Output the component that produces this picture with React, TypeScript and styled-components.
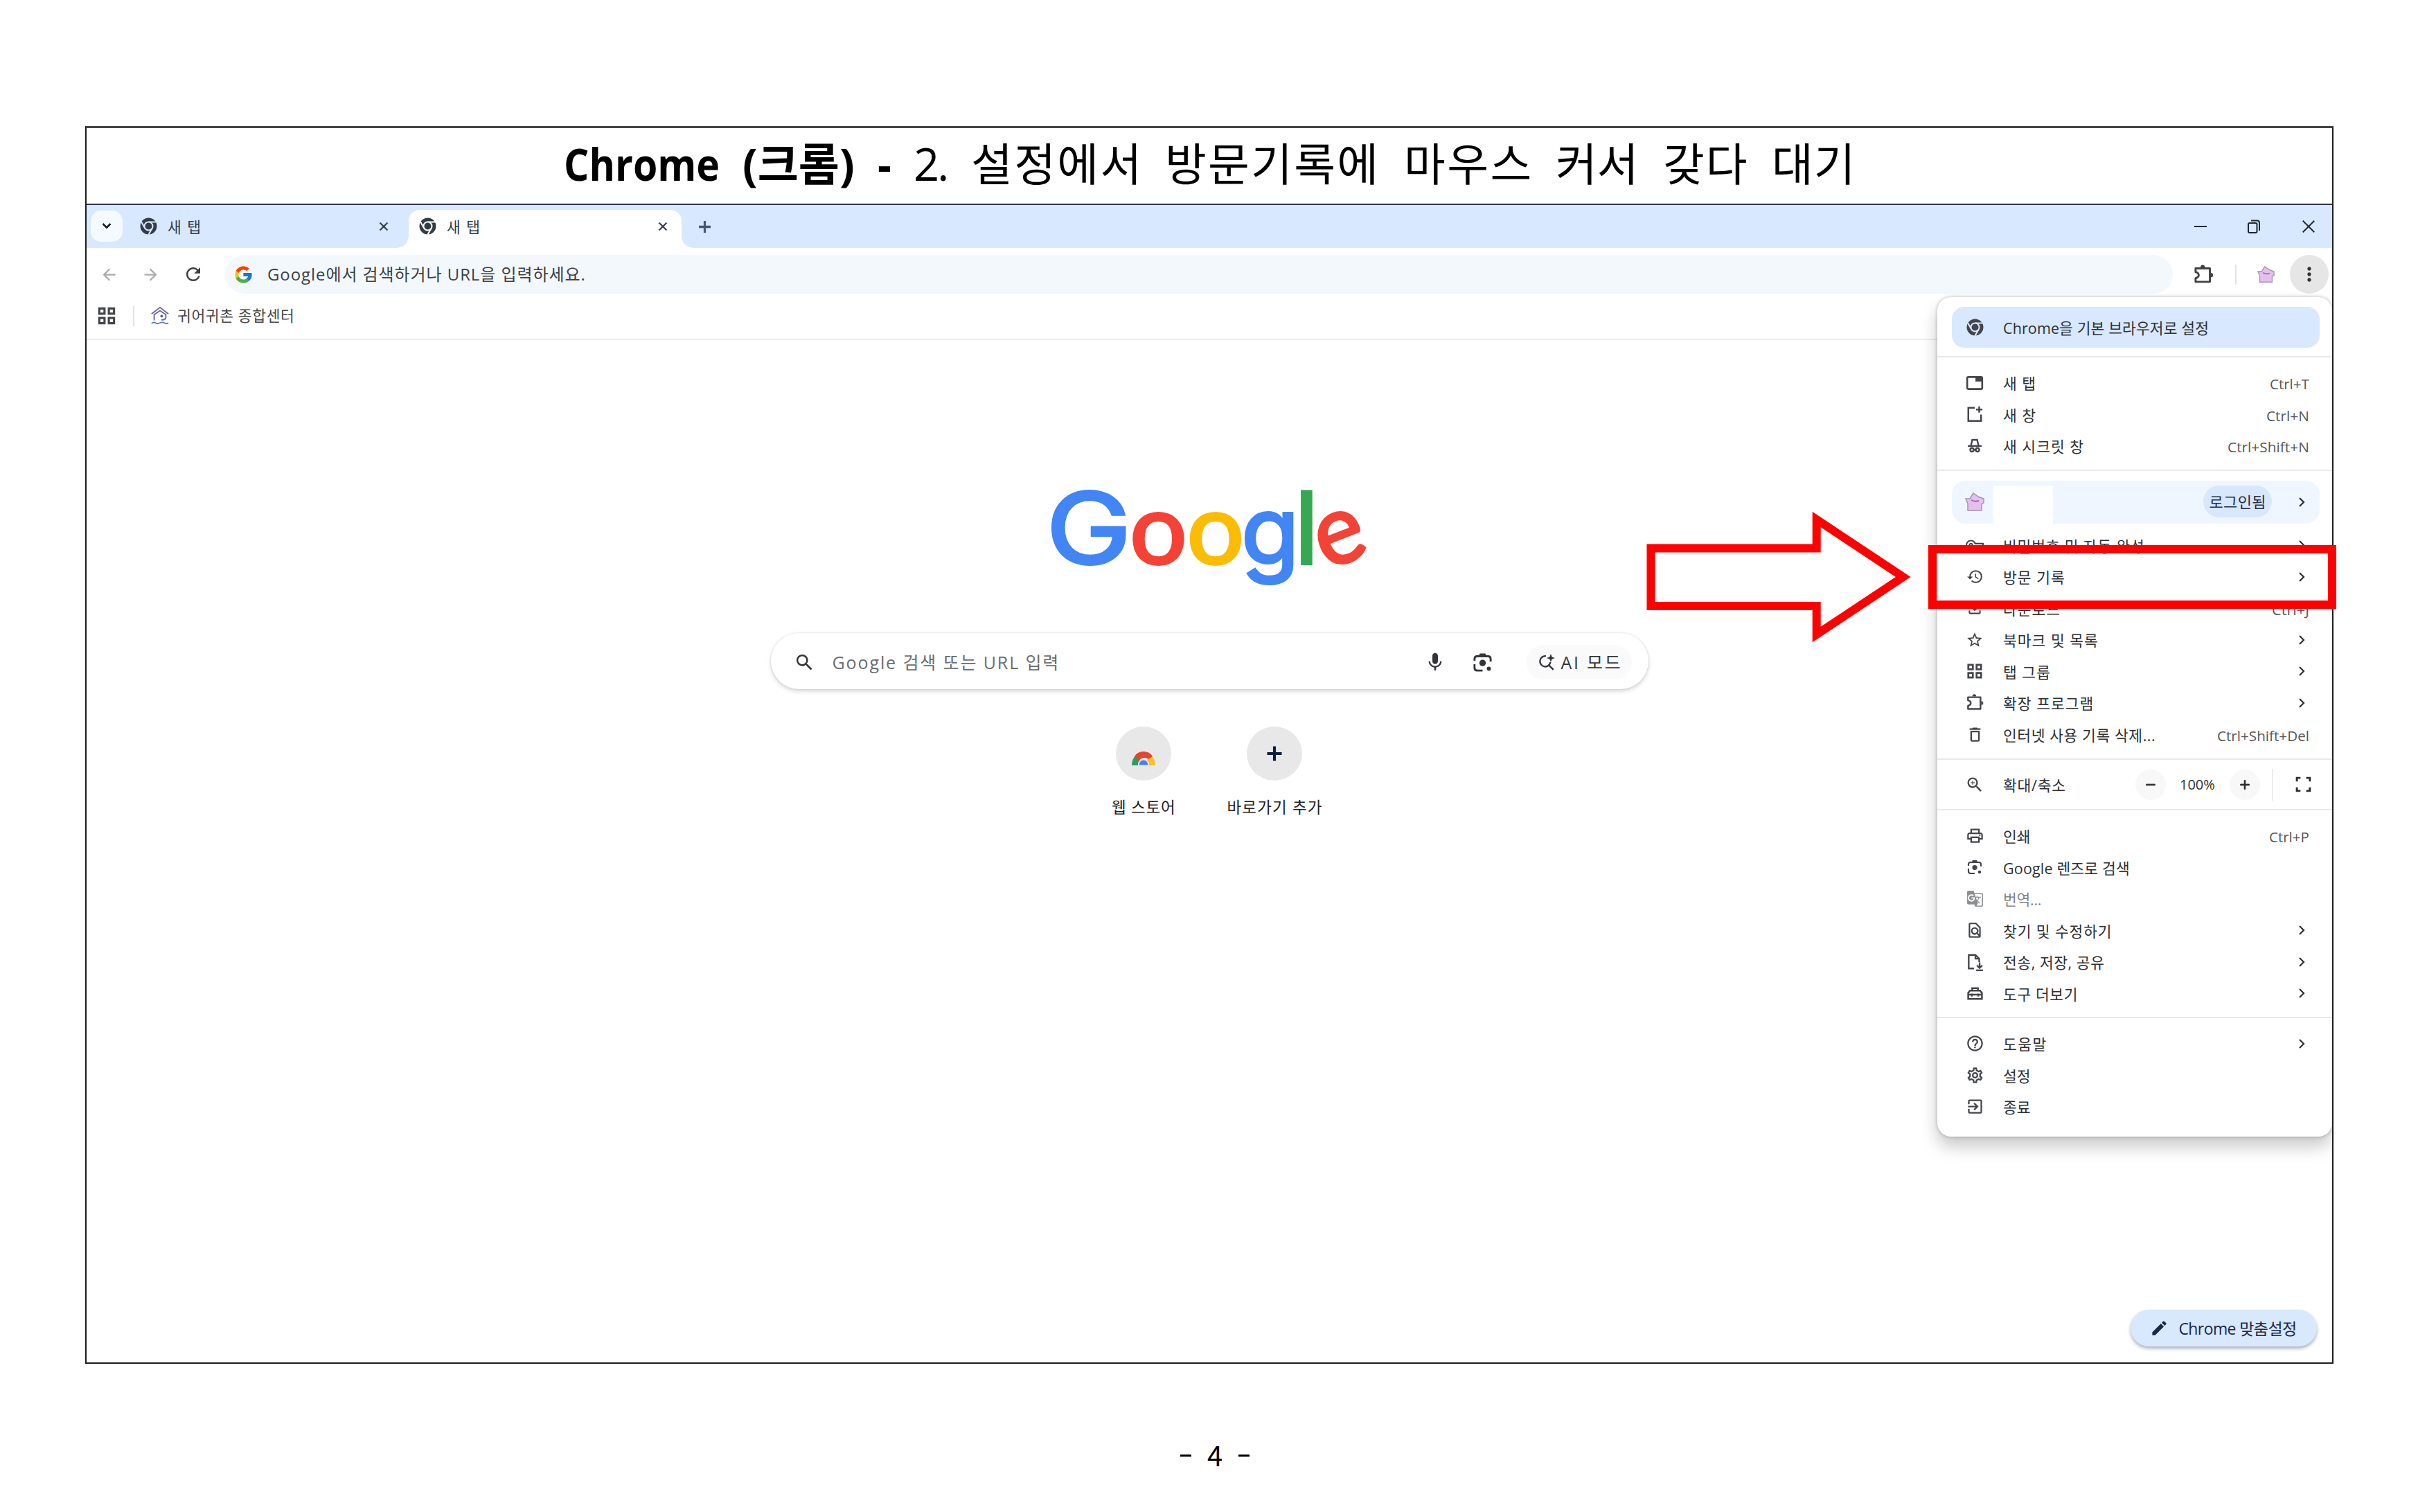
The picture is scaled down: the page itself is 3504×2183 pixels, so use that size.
import React from 'react';
import styled, { createGlobalStyle } from 'styled-components';
import {
  MdAdd,
  MdArrowBack,
  MdArrowForward,
  MdClose,
  MdEdit,
  MdExitToApp,
  MdGTranslate,
  MdHelpOutline,
  MdHistory,
  MdKeyboardArrowDown,
  MdMic,
  MdMoreVert,
  MdOutlineDelete,
  MdOutlineFileDownload,
  MdOutlineFindInPage,
  MdOutlinePrint,
  MdOutlineSettings,
  MdOutlineVpnKey,
  MdRefresh,
  MdRemove,
  MdSearch,
  MdStarBorder,
  MdZoomIn,
} from 'react-icons/md';
import { FcGoogle } from 'react-icons/fc';

const GlobalStyle = createGlobalStyle`
  * {
    box-sizing: border-box;
  }
  body {
    margin: 0;
    background: #ffffff;
    font-family: 'Open Sans', 'Noto Sans CJK KR', sans-serif;
    color: #2d2f33;
  }
  svg {
    display: block;
    flex: none;
  }
`;

/* ---------- text ---------- */

const TextSlot = styled.span<{ $width: number }>`
  display: inline-block;
  flex: none;
  width: ${(p) => p.$width}px;
  white-space: nowrap;
`;
const TextRun = styled.span`
  display: inline-block;
  transform-origin: 0 50%;
`;

interface FitProps {
  text: string;
  width: number;
  squeeze?: boolean;
}

// Fits a label to a fixed width, by its letter spacing or (squeeze) by narrowing the glyphs
function Fit({ text, width, squeeze }: FitProps) {
  const ref = React.useRef<HTMLSpanElement>(null);
  const [natural, setNatural] = React.useState<number>(width);

  React.useLayoutEffect(() => {
    if (!ref.current) return;
    ref.current.style.letterSpacing = '0px';
    const measured = ref.current.offsetWidth;
    ref.current.style.letterSpacing = squeeze ? '0px' : `${(width - measured) / Math.max(1, text.length - 1)}px`;
    setNatural(measured);
  }, [text, width, squeeze]);

  const fitted = squeeze
    ? { transform: `scaleX(${width / natural})` }
    : { letterSpacing: `${(width - natural) / Math.max(1, text.length - 1)}px` };

  return (
    <TextSlot $width={width}>
      <TextRun ref={ref} style={fitted}>
        {text}
      </TextRun>
    </TextSlot>
  );
}

/* ---------- icons ---------- */

interface IconProps {
  size?: number;
  back?: string;
}

const Heavy = styled.span`
  path:not([fill='none']) {
    stroke: currentColor;
    stroke-width: 0.9px;
  }
`;

const Stroke = ({ size = 26, width = 2, children }: { size?: number; width?: number; children: React.ReactNode }) => (
  <svg width={size} height={size} viewBox="0 0 24 24" fill="none" stroke="currentColor" strokeWidth={width}>
    {children}
  </svg>
);

const ChromeIcon = ({ size = 25, back = '#d8e8fe' }: IconProps) => (
  <svg width={size} height={size} viewBox="0 0 24 24">
    <circle cx="12" cy="12" r="11.5" fill="currentColor" />
    <g stroke={back} strokeWidth="2">
      <path d="M12 6.2H22.5M7 14.9L1.8 5.8M17 14.9L11.8 24" />
      <circle cx="12" cy="12" r="5.8" fill="currentColor" />
    </g>
  </svg>
);

const PuzzleIcon = ({ size = 26 }: IconProps) => (
  <svg width={size} height={size} viewBox="0 0 24 24" fill="none" stroke="currentColor" strokeWidth="2.2">
    <path d="M3 5H19V20H3V16Q6.500 15 6.500 12.500Q6.500 10 3 9Z" strokeLinejoin="round" />
    <path d="M8.500 4A2.500 2.800 0 0 1 13.500 4ZM20 10A2.500 2.500 0 0 1 20 15Z" fill="currentColor" stroke="none" />
  </svg>
);

const GridIcon = ({ size = 26 }: IconProps) => (
  <Stroke size={size} width={2.5}>
    <path d="M3.500 3.500H9.500V9.500H3.500ZM14.500 3.500H20.500V9.500H14.500ZM3.500 14.500H9.500V20.500H3.500ZM14.500 14.500H20.500V20.500H14.500Z" />
  </Stroke>
);

const NewTabIcon = () => (
  <Stroke width={2.4}>
    <rect x="2" y="4" width="20" height="16" rx="1.500" />
    <path d="M13 4H22V10H13Z" fill="currentColor" stroke="none" />
  </Stroke>
);

const NewWindowIcon = () => (
  <Stroke width={2.3}>
    <path d="M12 3.500H3.500V21H20.500V12.500M18 1.500V10M13.800 5.800H22.200" />
  </Stroke>
);

const IncognitoIcon = () => (
  <Stroke size={24} width={2.4}>
    <path d="M2 12H22M6.500 11.500L8.500 3H15.500L17.500 11.500M10.500 17.500H13.500" />
    <circle cx="8" cy="17.500" r="2.500" />
    <circle cx="16" cy="17.500" r="2.500" />
  </Stroke>
);

const LensIcon = ({ size = 26 }: IconProps) => (
  <Stroke size={size} width={2.2}>
    <path d="M3 10V8Q3 5 6 5H18Q21 5 21 8V11M3 14V18Q3 21 6 21H12" />
    <path d="M7.500 5L9 2H15L16.500 5Z" fill="currentColor" stroke="none" />
    <circle cx="12" cy="12.500" r="3.600" fill="currentColor" stroke="none" />
    <circle cx="19" cy="19" r="2.300" fill="currentColor" stroke="none" />
  </Stroke>
);

const SendIcon = () => (
  <Stroke width={2.2}>
    <path d="M11 20.500H4V2.500H13L18 7.500V12M13 2.500V7.500H18" />
    <path d="M18.500 12.500V20M15 16.500L18.500 20L22 16.500M14 23H23" />
  </Stroke>
);

const ToolboxIcon = () => (
  <Stroke size={25} width={2.4}>
    <path d="M2.500 19.500V11L5 8H19L21.500 11V19.500ZM8 8V4.500H16V8M2.500 13.500H21.500M7.500 12V16M16.500 12V16" />
  </Stroke>
);

const FullscreenIcon = () => (
  <Stroke size={25} width={2.8}>
    <path d="M3 8V3H8M16 3H21V8M21 16V21H16M8 21H3V16" />
  </Stroke>
);

const AiIcon = () => (
  <Stroke size={26} width={2.2}>
    <path d="M11 4A7 7 0 1 0 17 12M14.500 15.500L21 22" />
    <path d="M17.500 1L19 5L23 6.500L19 8L17.500 12L16 8L12 6.500L16 5Z" fill="currentColor" stroke="none" />
  </Stroke>
);

const CenterIcon = () => (
  <svg width="28" height="28" viewBox="0 0 30 30" fill="none" stroke="#6a62a8" strokeWidth="2">
    <path d="M2 12L15 2L28 12" />
    <path d="M6 22V13L15 7L24 13V18Q23 22 17 21" />
    <circle cx="17.500" cy="15.500" r="2" fill="#4060a8" stroke="none" />
    <path d="M2 27Q5 24 8 26T15 26T22 26T28 26" stroke="#5a7fb0" />
  </svg>
);

const AvatarIcon = ({ size = 28 }: IconProps) => (
  <svg width={size} height={size} viewBox="0 0 28 28">
    <path d="M1 9L7 9L12 1L19 6L27 9V15L24 17V26H4V16Z" fill="#e5bfee" stroke="#a893ae" strokeWidth="1.500" />
    <path d="M9 11Q14 14 20 12" fill="none" stroke="#a56bb5" strokeWidth="2" />
  </svg>
);

const RainbowIcon = () => (
  <svg width="34" height="21" viewBox="0 0 34 21">
    <path d="M0 21A17 20 0 0 1 6 6L12 13A8 9 0 0 0 9 21Z" fill="#2f9e58" />
    <path d="M34 21A17 20 0 0 0 28 6L22 13A8 9 0 0 1 25 21Z" fill="#fbc02d" />
    <path d="M4 8A15 14 0 0 1 30 8L24 12Q17 7 10 14Z" fill="#e2462f" />
    <path d="M10 21A7 8 0 0 1 24 21Z" fill="#4a80e8" stroke="#e8e8e8" strokeWidth="1" />
  </svg>
);

const RestoreIcon = () => (
  <svg width="20" height="22" viewBox="0 0 20 22" fill="none" stroke="currentColor" strokeWidth="2">
    <rect x="2" y="6" width="12.500" height="14" rx="2" />
    <path d="M6 2.500H15Q18 2.500 18 6V17" />
  </svg>
);

const ChevronIcon = () => (
  <svg width="22" height="22" viewBox="0 0 22 22" fill="none" stroke="currentColor" strokeWidth="2.200">
    <path d="M8 5L14 11L8 17" />
  </svg>
);

/* ---------- document page ---------- */

const Page = styled.main`
  position: relative;
  width: 3504px;
  height: 2183px;
  padding: 182px 0 0 123px;
  overflow: hidden;
  background: #ffffff;
`;
const Frame = styled.section`
  display: flex;
  flex-direction: column;
  width: 3246px;
  height: 1787px;
  border: 2px solid #1c1c1c;
  border-top: 3px solid #444444;
`;
const Heading = styled.h1`
  display: flex;
  align-items: center;
  height: 111px;
  margin: 0;
  padding: 0 0 7px 689px;
  border-bottom: 2px solid #2c3440;
  font-size: 65px;
  font-weight: 400;
  line-height: 102px;
  color: #000000;
`;
const Word = styled.span<{ $gap: number; $bold?: boolean }>`
  margin-right: ${(p) => p.$gap}px;
  font-weight: ${(p) => (p.$bold ? 700 : 400)};
`;
const PageNumber = styled.footer`
  display: flex;
  justify-content: center;
  gap: 23px;
  width: 104px;
  margin: 103px 0 0 1579px;
  font-family: 'Noto Sans CJK KR', sans-serif;
  font-size: 40px;
  line-height: 56px;
  color: #000000;
`;
const Dash = styled.span`
  width: 16px;
  height: 3px;
  margin-top: 28px;
  background: #000000;
`;

/* ---------- browser ---------- */

const Browser = styled.div`
  position: relative;
  display: flex;
  flex-direction: column;
  flex: 1;
  overflow: hidden;
`;
const TabStrip = styled.div`
  display: flex;
  align-items: center;
  height: 62px;
  padding: 0 23px 0 6px;
  background: #d8e8fe;
  color: #333b47;
`;
const TabSearch = styled.button`
  display: flex;
  align-items: center;
  justify-content: center;
  width: 46px;
  height: 45px;
  margin-top: -2px;
  padding: 0;
  border: 0;
  border-radius: 15px;
  background: #f4faff;
  color: #1f2022;
`;
const Tab = styled.div<{ $active?: boolean }>`
  position: relative;
  align-self: flex-end;
  display: flex;
  align-items: center;
  width: ${(p) => (p.$active ? 394 : 413)}px;
  height: 55px;
  padding: ${(p) => (p.$active ? '0 17px 8px 15px' : '0 26px 8px 25px')};
  border-radius: 16px 16px 0 0;
  background: ${(p) => (p.$active ? '#ffffff' : 'transparent')};
  font-size: 21.5px;
  line-height: 30px;

  &::before,
  &::after {
    content: '';
    position: absolute;
    bottom: 0;
    width: 16px;
    height: 16px;
    display: ${(p) => (p.$active ? 'block' : 'none')};
  }
  &::before {
    left: -16px;
    background: radial-gradient(circle at 0 0, transparent 15px, #ffffff 16px);
  }
  &::after {
    right: -16px;
    background: radial-gradient(circle at 100% 0, transparent 15px, #ffffff 16px);
  }
`;
const TabTitle = styled.span`
  flex: 1;
  margin: 2px 0 0 15px;
`;
const NewTabButton = styled.span`
  margin-left: 20px;
  color: #45566e;
`;
const WindowButtons = styled.div`
  display: flex;
  align-items: center;
  gap: 58px;
  margin-left: auto;
  color: #1c2430;
`;
const MinimizeBar = styled.span`
  width: 18px;
  height: 2px;
  background: #1c2430;
`;

const Toolbar = styled.div`
  display: flex;
  align-items: center;
  height: 76px;
  padding: 0 5px 0 19px;
  color: #3e4043;
`;
const NavButton = styled.span<{ $off?: boolean; $gap: number }>`
  margin-right: ${(p) => p.$gap}px;
  color: ${(p) => (p.$off ? '#a9abae' : '#3c3e41')};
`;
const Omnibox = styled.div`
  display: flex;
  align-items: center;
  width: 2812px;
  height: 56px;
  padding-left: 12px;
  border-radius: 28px;
  background: #f3f8fd;
  font-size: 24px;
  line-height: 34px;
`;
const OmniboxText = styled.span`
  margin-left: 20px;
`;
const ToolbarEnd = styled.div`
  display: flex;
  align-items: center;
  margin-left: auto;
`;
const ToolbarRule = styled.span<{ $gap: number }>`
  width: 2px;
  height: 29px;
  margin: 0 ${(p) => p.$gap}px;
  background: #dfe3e8;
`;
const MenuButton = styled.button`
  display: flex;
  align-items: center;
  justify-content: center;
  width: 56px;
  height: 56px;
  margin-left: 22px;
  padding: 0;
  border: 0;
  border-radius: 50%;
  background: #e6e6e7;
  color: #303134;
`;
const Bookmarks = styled.div`
  display: flex;
  align-items: center;
  height: 55px;
  padding: 0 0 11px 14px;
  margin-bottom: 2px;
  box-shadow: 0 1px 0 1px #ebebeb;
  color: #44464a;
  font-size: 21.5px;
  line-height: 30px;
`;
const BookmarkLabel = styled.span`
  margin-left: 11px;
`;

/* ---------- new tab page ---------- */

const Content = styled.div`
  display: flex;
  flex-direction: column;
  align-items: center;
  padding-top: 184px;
`;
const Logo = styled.div`
  display: flex;
  align-items: baseline;
  width: 456px;
  height: 170px;
  margin-right: 5px;
  font-family: Lato, sans-serif;
  font-size: 141px;
  line-height: 170px;
`;
const LogoLetter = styled.span<{ $width: number; $color: string; $stretch?: number; $turn?: number; $size?: number }>`
  display: flex;
  flex: none;
  justify-content: center;
  width: ${(p) => p.$width}px;
  color: ${(p) => p.$color};
  font-family: ${(p) => (p.$size ? 'Inter' : 'Lato')}, sans-serif;
  font-size: ${(p) => p.$size || 141}px;
  -webkit-text-stroke: 4px ${(p) => p.$color};
  transform: scaleX(${(p) => p.$stretch || 1}) rotate(${(p) => p.$turn || 0}deg);
`;
const SearchBox = styled.div`
  display: flex;
  align-items: center;
  width: 1267px;
  height: 81px;
  margin-top: 69px;
  padding: 3px 24px 0 33px;
  border-radius: 41px;
  box-shadow: 0 3px 6px rgba(0, 0, 0, 0.16), 0 0 3px rgba(0, 0, 0, 0.12);
  color: #333538;
  font-size: 25px;
  line-height: 36px;
`;
const SearchHint = styled.span`
  flex: 1;
  margin-left: 25px;
  color: #6b6d70;
`;
const AiMode = styled.span`
  display: flex;
  align-items: center;
  gap: 8px;
  height: 50px;
  margin-left: 48px;
  padding: 0 16px;
  border-radius: 25px;
  background: #fafafb;
`;
const LensSlot = styled.span`
  margin-left: 37px;
`;
const Shortcuts = styled.div`
  display: flex;
  gap: 40px;
  margin: 54px 1px 0 0;
`;
const Shortcut = styled.div`
  display: flex;
  flex-direction: column;
  align-items: center;
  width: 149px;
  font-size: 22.5px;
  line-height: 32px;
  color: #1f2022;
`;
const ShortcutDisc = styled.span`
  display: flex;
  align-items: center;
  justify-content: center;
  width: 80px;
  height: 78px;
  margin-bottom: 23px;
  border-radius: 50%;
  background: #e8e8e8;
  color: #0c1f42;
`;
const RainbowSlot = styled.span`
  margin-top: 12px;
`;
const Customize = styled.button`
  position: absolute;
  right: 22px;
  bottom: 23px;
  display: flex;
  align-items: center;
  gap: 14px;
  width: 269px;
  height: 53px;
  padding: 0 0 0 28px;
  border: 0;
  border-radius: 27px;
  background: #d8e8fd;
  box-shadow: 0 3px 5px rgba(40, 60, 90, 0.4);
  color: #1c2746;
  font-family: inherit;
  font-size: 23px;
  line-height: 32px;
`;

/* ---------- menu ---------- */

const Menu = styled.nav`
  position: absolute;
  top: 133px;
  right: 0;
  width: 570px;
  height: 1212px;
  padding-top: 14px;
  border-radius: 20px;
  background: #ffffff;
  box-shadow: 0 14px 24px rgba(0, 0, 0, 0.22), 0 0 5px rgba(0, 0, 0, 0.25);
  font-size: 21.5px;
  line-height: 30px;
`;
const MenuPill = styled.div<{ $profile?: boolean }>`
  display: flex;
  align-items: center;
  height: ${(p) => (p.$profile ? 62 : 59)}px;
  margin: 0 18px ${(p) => (p.$profile ? 9 : 12)}px 21px;
  padding: 0 15px 0 13px;
  border-radius: ${(p) => (p.$profile ? 20 : 18)}px;
  background: ${(p) => (p.$profile ? '#eff6ff' : '#d8e8fe')};
`;
const MenuGroup = styled.div<{ $top: number; $bottom: number }>`
  padding: ${(p) => p.$top}px 0 ${(p) => p.$bottom}px;
  border-top: 2px solid #e8e8ea;
`;
const MenuRow = styled.div<{ $muted?: boolean }>`
  display: flex;
  align-items: center;
  height: 45.5px;
  padding: 0 33px 0 34px;
  opacity: ${(p) => (p.$muted ? 0.6 : 1)};
`;
const MenuIcon = styled.span`
  display: flex;
  align-items: center;
  justify-content: center;
  flex: none;
  width: 40px;
  margin-right: 21px;
  color: #434549;
`;
const MenuLabel = styled.span`
  flex: 1;
  margin-top: 3px;
`;
const MenuHint = styled.span`
  margin-top: 3px;
  color: #55575a;
  font-size: 20.5px;
`;
const ProfileName = styled.span`
  width: 86px;
  height: 55px;
  margin: 7px auto 0 -14px;
  background: #ffffff;
`;
const SignedIn = styled.span`
  display: flex;
  align-items: center;
  justify-content: center;
  width: 99px;
  height: 46px;
  margin: -2px 32px 0 0;
  border-radius: 23px;
  background: #d8e7fb;
  color: #1d2f4c;
  font-size: 22px;
`;
const ZoomRow = styled.div`
  display: flex;
  align-items: center;
  height: 73px;
  padding: 0 29px 0 34px;
  border-top: 2px solid #e8e8ea;
`;
const ZoomButton = styled.span`
  display: flex;
  align-items: center;
  justify-content: center;
  width: 44px;
  height: 44px;
  border-radius: 50%;
  background: #f8f8f9;
`;
const ZoomValue = styled.span`
  margin: 0 21px 0 20px;
  font-size: 20px;
`;
const ZoomRule = styled.span`
  width: 2px;
  height: 46px;
  margin: 0 31px 0 17px;
  background: #ececee;
`;

/* ---------- annotations ---------- */

const HighlightBox = styled.div`
  position: absolute;
  left: 2784px;
  top: 787px;
  width: 589px;
  height: 92px;
  border: 12px solid #ff0000;
`;
const PointerArrow = styled.svg`
  position: absolute;
  left: 2370px;
  top: 730px;
`;

interface TitleWord {
  text: string;
  width: number;
  gap: number;
  bold?: boolean;
}

const titleWords: TitleWord[] = [
  { text: 'Chrome', width: 225, gap: 33, bold: true },
  { text: '(크롬)', width: 162, gap: 33, bold: true },
  { text: '-', width: 20, gap: 32, bold: true },
  { text: '2.', width: 51, gap: 32 },
  { text: '설정에서', width: 246, gap: 34 },
  { text: '방문기록에', width: 308, gap: 37 },
  { text: '마우스', width: 184, gap: 35 },
  { text: '커서', width: 120, gap: 35 },
  { text: '갖다', width: 122, gap: 35 },
  { text: '대기', width: 121, gap: 0 },
];

interface MenuEntry {
  icon: React.ReactNode;
  label: string;
  width: number;
  hint?: string;
  hintWidth?: number;
  submenu?: boolean;
  muted?: boolean;
}

const tabEntries: MenuEntry[] = [
  { icon: <NewTabIcon />, label: '새 탭', width: 47, hint: 'Ctrl+T', hintWidth: 57 },
  { icon: <NewWindowIcon />, label: '새 창', width: 47, hint: 'Ctrl+N', hintWidth: 62 },
  { icon: <IncognitoIcon />, label: '새 시크릿 창', width: 116, hint: 'Ctrl+Shift+N', hintWidth: 118 },
];
const dataEntries: MenuEntry[] = [
  { icon: <MdOutlineVpnKey size={26} />, label: '비밀번호 및 자동 완성', width: 204, submenu: true },
  { icon: <MdHistory size={25} />, label: '방문 기록', width: 89, submenu: true },
  { icon: <MdOutlineFileDownload size={26} />, label: '다운로드', width: 82, hint: 'Ctrl+J', hintWidth: 54 },
  { icon: <MdStarBorder size={26} />, label: '북마크 및 목록', width: 137, submenu: true },
  { icon: <GridIcon />, label: '탭 그룹', width: 68, submenu: true },
  { icon: <PuzzleIcon size={27} />, label: '확장 프로그램', width: 130, submenu: true },
  { icon: <MdOutlineDelete size={27} />, label: '인터넷 사용 기록 삭제...', width: 220, hint: 'Ctrl+Shift+Del', hintWidth: 133 },
];
const pageEntries: MenuEntry[] = [
  { icon: <MdOutlinePrint size={27} />, label: '인쇄', width: 40, hint: 'Ctrl+P', hintWidth: 58 },
  { icon: <LensIcon size={24} />, label: 'Google 렌즈로 검색', width: 183 },
  { icon: <MdGTranslate size={25} />, label: '번역...', width: 56, muted: true },
  { icon: <MdOutlineFindInPage size={26} />, label: '찾기 및 수정하기', width: 157, submenu: true },
  { icon: <SendIcon />, label: '전송, 저장, 공유', width: 146, submenu: true },
  { icon: <ToolboxIcon />, label: '도구 더보기', width: 108, submenu: true },
];
const appEntries: MenuEntry[] = [
  { icon: <MdHelpOutline size={27} />, label: '도움말', width: 62, submenu: true },
  { icon: <MdOutlineSettings size={27} />, label: '설정', width: 40 },
  { icon: <MdExitToApp size={27} />, label: '종료', width: 40 },
];

const renderEntry = (entry: MenuEntry) => (
  <MenuRow key={entry.label} $muted={entry.muted}>
    <MenuIcon>{entry.icon}</MenuIcon>
    <MenuLabel>
      <Fit text={entry.label} width={entry.width} />
    </MenuLabel>
    {entry.hint && (
      <MenuHint>
        <Fit text={entry.hint} width={entry.hintWidth || 60} squeeze />
      </MenuHint>
    )}
    {entry.submenu && <ChevronIcon />}
  </MenuRow>
);

function ChromeMenu() {
  return (
    <Menu>
      <MenuPill>
        <MenuIcon>
          <ChromeIcon />
        </MenuIcon>
        <MenuLabel>
          <Fit text="Chrome을 기본 브라우저로 설정" width={297} />
        </MenuLabel>
      </MenuPill>
      <MenuGroup $top={14} $bottom={11}>
        {tabEntries.map(renderEntry)}
      </MenuGroup>
      <MenuGroup $top={14} $bottom={12}>
        <MenuPill $profile>
          <MenuIcon>
            <AvatarIcon size={28} />
          </MenuIcon>
          <ProfileName />
          <SignedIn>
            <Fit text="로그인됨" width={82} />
          </SignedIn>
          <ChevronIcon />
        </MenuPill>
        {dataEntries.map(renderEntry)}
      </MenuGroup>
      <ZoomRow>
        <MenuIcon>
          <MdZoomIn size={28} />
        </MenuIcon>
        <MenuLabel>
          <Fit text="확대/축소" width={90} />
        </MenuLabel>
        <ZoomButton>
          <Heavy>
            <MdRemove size={22} />
          </Heavy>
        </ZoomButton>
        <ZoomValue>
          <Fit text="100%" width={51} squeeze />
        </ZoomValue>
        <ZoomButton>
          <Heavy>
            <MdAdd size={22} />
          </Heavy>
        </ZoomButton>
        <ZoomRule />
        <FullscreenIcon />
      </ZoomRow>
      <MenuGroup $top={14} $bottom={11}>
        {pageEntries.map(renderEntry)}
      </MenuGroup>
      <MenuGroup $top={14} $bottom={18}>
        {appEntries.map(renderEntry)}
      </MenuGroup>
    </Menu>
  );
}

function NewTabPage() {
  return (
    <Content>
      <Logo>
        <LogoLetter $width={112} $color="#4285f4" $stretch={1.16} $size={142}>G</LogoLetter>
        <LogoLetter $width={89} $color="#f44336" $stretch={1.03}>o</LogoLetter>
        <LogoLetter $width={76} $color="#fbbc05" $stretch={1.03}>o</LogoLetter>
        <LogoLetter $width={82} $color="#4285f4" $stretch={1.02} $size={134}>g</LogoLetter>
        <LogoLetter $width={24} $color="#34a853">l</LogoLetter>
        <LogoLetter $width={60} $color="#f44336" $turn={-20} $stretch={0.94}>e</LogoLetter>
      </Logo>
      <SearchBox>
        <MdSearch size={31} />
        <SearchHint>
          <Fit text="Google 검색 또는 URL 입력" width={327} />
        </SearchHint>
        <MdMic size={32} />
        <LensSlot>
          <LensIcon size={31} />
        </LensSlot>
        <AiMode>
          <AiIcon />
          <Fit text="AI 모드" width={86} />
        </AiMode>
      </SearchBox>
      <Shortcuts>
        <Shortcut>
          <ShortcutDisc>
            <RainbowSlot>
              <RainbowIcon />
            </RainbowSlot>
          </ShortcutDisc>
          <Fit text="웹 스토어" width={92} />
        </Shortcut>
        <Shortcut>
          <ShortcutDisc>
            <Heavy>
              <MdAdd size={34} />
            </Heavy>
          </ShortcutDisc>
          <Fit text="바로가기 추가" width={137} />
        </Shortcut>
      </Shortcuts>
      <Customize>
        <MdEdit size={27} />
        <Fit text="Chrome 맞춤설정" width={171} />
      </Customize>
    </Content>
  );
}

function App() {
  return (
    <Page>
      <GlobalStyle />
      <Frame>
        <Heading>
          {titleWords.map((word) => (
            <Word key={word.text} $gap={word.gap} $bold={word.bold}>
              <Fit text={word.text} width={word.width} squeeze={word.bold} />
            </Word>
          ))}
        </Heading>
        <Browser>
          <TabStrip>
            <TabSearch>
              <Heavy>
                <MdKeyboardArrowDown size={24} />
              </Heavy>
            </TabSearch>
            <Tab>
              <ChromeIcon />
              <TabTitle>
                <Fit text="새 탭" width={48} />
              </TabTitle>
              <Heavy>
                <MdClose size={20} />
              </Heavy>
            </Tab>
            <Tab $active>
              <ChromeIcon back="#ffffff" />
              <TabTitle>
                <Fit text="새 탭" width={48} />
              </TabTitle>
              <Heavy>
                <MdClose size={20} />
              </Heavy>
            </Tab>
            <NewTabButton>
              <Heavy>
                <MdAdd size={27} />
              </Heavy>
            </NewTabButton>
            <WindowButtons>
              <MinimizeBar />
              <RestoreIcon />
              <Stroke size={22} width={2}>
                <path d="M3 3L21 21M21 3L3 21" />
              </Stroke>
            </WindowButtons>
          </TabStrip>
          <Toolbar>
            <NavButton $off $gap={33}>
              <MdArrowBack size={27} />
            </NavButton>
            <NavButton $off $gap={33}>
              <MdArrowForward size={27} />
            </NavButton>
            <NavButton $gap={31}>
              <MdRefresh size={30} />
            </NavButton>
            <Omnibox>
              <FcGoogle size={29} />
              <OmniboxText>
                <Fit text="Google에서 검색하거나 URL을 입력하세요." width={459} />
              </OmniboxText>
            </Omnibox>
            <ToolbarEnd>
              <PuzzleIcon size={31} />
              <ToolbarRule $gap={30} />
              <AvatarIcon size={25} />
              <MenuButton>
                <MdMoreVert size={32} />
              </MenuButton>
            </ToolbarEnd>
          </Toolbar>
          <Bookmarks>
            <GridIcon size={30} />
            <ToolbarRule $gap={23} />
            <CenterIcon />
            <BookmarkLabel>
              <Fit text="귀어귀촌 종합센터" width={169} />
            </BookmarkLabel>
          </Bookmarks>
          <NewTabPage />
          <ChromeMenu />
        </Browser>
      </Frame>
      <PageNumber>
        <Dash />
        <span>4</span>
        <Dash />
      </PageNumber>
      <PointerArrow width="400" height="206" viewBox="2370 730 400 206">
        <path
          d="M2383.500 791.500H2622.700V750L2747.700 833L2622.700 916V875H2383.500Z"
          fill="#ffffff"
          stroke="#ff0000"
          strokeWidth="12"
        />
      </PointerArrow>
      <HighlightBox />
    </Page>
  );
}
export default App;
